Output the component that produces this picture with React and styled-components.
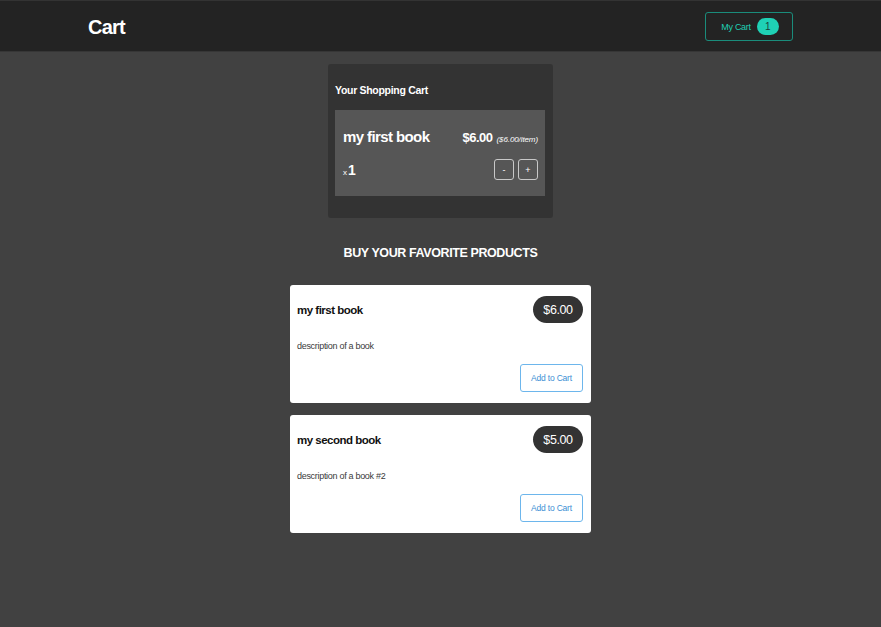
import styled, { createGlobalStyle } from 'styled-components';

const GlobalStyle = createGlobalStyle`
  body {
    margin: 0;
    background: #414141;
    font-family: "Liberation Sans", Arial, sans-serif;
  }
`;

const Header = styled.header`
  height: 50px;
  background: #232323;
  border-top: 1px solid #333;
  border-bottom: 1px solid #363636;
  padding: 0 88px;
  display: flex;
  align-items: center;
  justify-content: space-between;

  h1 {
    margin: 2px 0 0;
    color: #fff;
    font-size: 20px;
    letter-spacing: -0.8px;
    font-weight: bold;
  }
`;

const CartButton = styled.button`
  width: 88px;
  height: 29px;
  margin-top: 1px;
  background: transparent;
  border: 1px solid #1a8c7b;
  border-radius: 3px;
  display: flex;
  align-items: center;
  justify-content: center;
  gap: 6px;
  color: #1fcfb3;
  font-family: inherit;
  font-size: 9px;
  letter-spacing: -0.3px;
  padding: 0 0 0 2px;
`;

const Badge = styled.span`
  background: #1fd1b5;
  color: #1d3d38;
  border-radius: 10px;
  width: 22px;
  height: 17px;
  display: flex;
  align-items: center;
  justify-content: center;
  font-size: 10px;
`;

const Main = styled.main`
  display: flex;
  flex-direction: column;
  align-items: center;
`;

const CartPanel = styled.section`
  margin-top: 12px;
  width: 225px;
  box-sizing: border-box;
  background: #333;
  border-radius: 3px;
  padding: 19px 8px 22px 7px;

  h2 {
    margin: 0 0 12px;
    color: #fff;
    font-size: 10.5px;
    letter-spacing: -0.3px;
    line-height: 15px;
    font-weight: bold;
  }
`;

const CartItem = styled.div`
  background: #565656;
  height: 86px;
  box-sizing: border-box;
  padding: 14px 7px 0 8px;
  color: #fff;
  display: flex;
  flex-direction: column;
  gap: 11px;
`;

const Row = styled.div`
  display: flex;
  align-items: center;
  justify-content: space-between;
  min-height: ${props => props.height || 0}px;
`;

const ItemName = styled.span`
  font-size: 15px;
  letter-spacing: -0.6px;
  font-weight: bold;
`;

const ItemPrice = styled.span`
  font-size: 13px;
  letter-spacing: -0.5px;
  font-weight: bold;
  margin-top: 2px;

  em {
    font-size: 8px;
    letter-spacing: -0.1px;
    font-weight: normal;
    margin-left: 4px;
  }
`;

const Qty = styled.span`
  font-size: 8px;
  b {
    font-size: 14px;
    margin-left: 1px;
  }
`;

const QtyButtons = styled.div`
  display: flex;
  gap: 4px;
`;

const QtyButton = styled.button`
  width: 20px;
  height: 21px;
  padding: 0;
  border: 1px solid #c8c8c8;
  border-radius: 3px;
  background: transparent;
  color: #fff;
  font-family: inherit;
  font-size: 9px;
`;

const Heading = styled.h2`
  margin: 26px 0 23px;
  color: #fff;
  font-size: 12.5px;
  letter-spacing: -0.4px;
  line-height: 18px;
  font-weight: bold;
`;

const ProductList = styled.div`
  display: flex;
  flex-direction: column;
  gap: 12px;
`;

const ProductCard = styled.div`
  width: 301px;
  box-sizing: border-box;
  background: #fff;
  border-radius: 3px;
  padding: 11px 8px 11px 7px;
  display: flex;
  flex-direction: column;
`;

const ProductTitle = styled.span`
  font-size: 11.5px;
  letter-spacing: -0.5px;
  font-weight: bold;
  color: #111;
`;

const PricePill = styled.span`
  background: #333;
  color: #fff;
  border-radius: 14px;
  width: 50px;
  height: 27px;
  display: flex;
  align-items: center;
  justify-content: center;
  font-size: 12.5px;
  letter-spacing: -0.4px;
`;

const Description = styled.p`
  margin: 16px 0 11px;
  font-size: 9px;
  letter-spacing: -0.3px;
  line-height: 14px;
  color: #3a3a3a;
`;

const AddButton = styled.button`
  align-self: flex-end;
  width: 63px;
  height: 28px;
  padding: 0;
  background: #fff;
  border: 1px solid #6db6ec;
  border-radius: 3px;
  color: #3b8fd4;
  font-family: inherit;
  font-size: 8.5px;
  letter-spacing: -0.2px;
`;

const products = [
  { title: 'my first book', price: '$6.00', description: 'description of a book' },
  { title: 'my second book', price: '$5.00', description: 'description of a book #2' },
];

function App() {
  return (
    <>
      <GlobalStyle />
      <Header>
        <h1>Cart</h1>
        <CartButton>
          My Cart <Badge>1</Badge>
        </CartButton>
      </Header>
      <Main>
        <CartPanel>
          <h2>Your Shopping Cart</h2>
          <CartItem>
            <Row height={24}>
              <ItemName>my first book</ItemName>
              <ItemPrice>
                $6.00<em>($6.00/item)</em>
              </ItemPrice>
            </Row>
            <Row height={21}>
              <Qty>
                x<b>1</b>
              </Qty>
              <QtyButtons>
                <QtyButton>-</QtyButton>
                <QtyButton>+</QtyButton>
              </QtyButtons>
            </Row>
          </CartItem>
        </CartPanel>
        <Heading>BUY YOUR FAVORITE PRODUCTS</Heading>
        <ProductList>
          {products.map(p => (
            <ProductCard key={p.title}>
              <Row>
                <ProductTitle>{p.title}</ProductTitle>
                <PricePill>{p.price}</PricePill>
              </Row>
              <Description>{p.description}</Description>
              <AddButton>Add to Cart</AddButton>
            </ProductCard>
          ))}
        </ProductList>
      </Main>
    </>
  );
}

export default App;
